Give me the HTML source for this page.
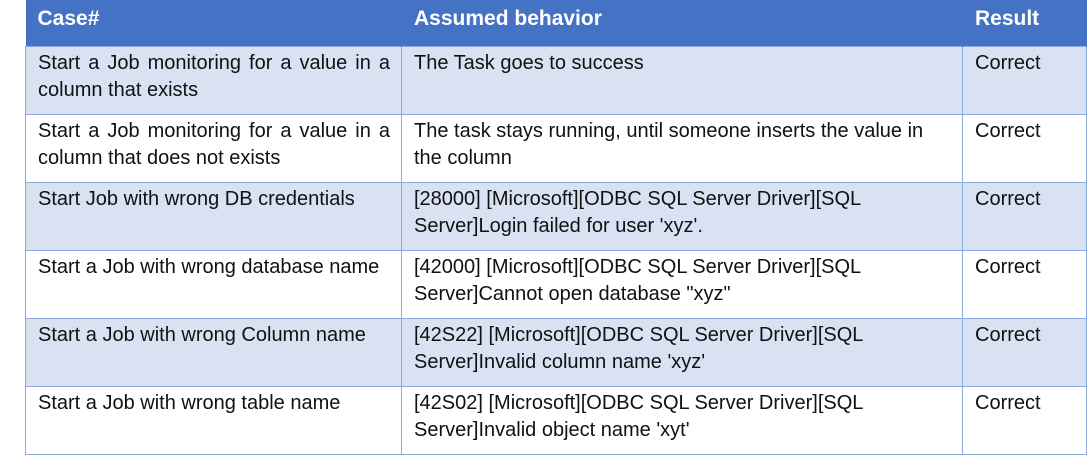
<!DOCTYPE html>
<html><head><style>
body{margin:0;width:1090px;height:452px;background:#fff;overflow:hidden;font-family:"Liberation Sans",sans-serif;}
table{position:absolute;left:25px;top:-1px;border-collapse:collapse;width:1061px;table-layout:fixed;}
td,th{border:1px solid #8EAADB;vertical-align:top;padding:3px 11px 0 12px;font-size:20px;line-height:27px;color:#111;white-space:nowrap;box-sizing:border-box;overflow:hidden;}
th{background:#4472C4;color:#fff;text-align:left;font-weight:bold;font-size:21px;height:47px;padding-top:6px;border:none;border-right:1px solid #4472C4;}
tr{height:68px;}
tr.h{height:47px;}
tr.a td{background:#D9E2F3;}
td.j{white-space:normal;text-align:left;}
td.j span{display:block;text-align:justify;text-align-last:justify;white-space:nowrap;}
</style></head><body>
<table>
<colgroup><col style="width:376px"><col style="width:561px"><col style="width:124px"></colgroup>
<tr class="h"><th>Case#</th><th>Assumed behavior</th><th>Result</th></tr>
<tr class="a"><td class="j"><span>Start a Job monitoring for a value in a</span>column that exists</td><td>The Task goes to success</td><td>Correct</td></tr>
<tr><td class="j"><span>Start a Job monitoring for a value in a</span>column that does not exists</td><td>The task stays running, until someone inserts the value in<br>the column</td><td>Correct</td></tr>
<tr class="a"><td>Start Job with wrong DB credentials</td><td>[28000] [Microsoft][ODBC SQL Server Driver][SQL<br>Server]Login failed for user 'xyz'.</td><td>Correct</td></tr>
<tr><td>Start a Job with wrong database name</td><td>[42000] [Microsoft][ODBC SQL Server Driver][SQL<br>Server]Cannot open database "xyz"</td><td>Correct</td></tr>
<tr class="a"><td>Start a Job with wrong Column name</td><td>[42S22] [Microsoft][ODBC SQL Server Driver][SQL<br>Server]Invalid column name 'xyz'</td><td>Correct</td></tr>
<tr><td>Start a Job with wrong table name</td><td>[42S02] [Microsoft][ODBC SQL Server Driver][SQL<br>Server]Invalid object name 'xyt'</td><td>Correct</td></tr>
</table>
</body></html>
